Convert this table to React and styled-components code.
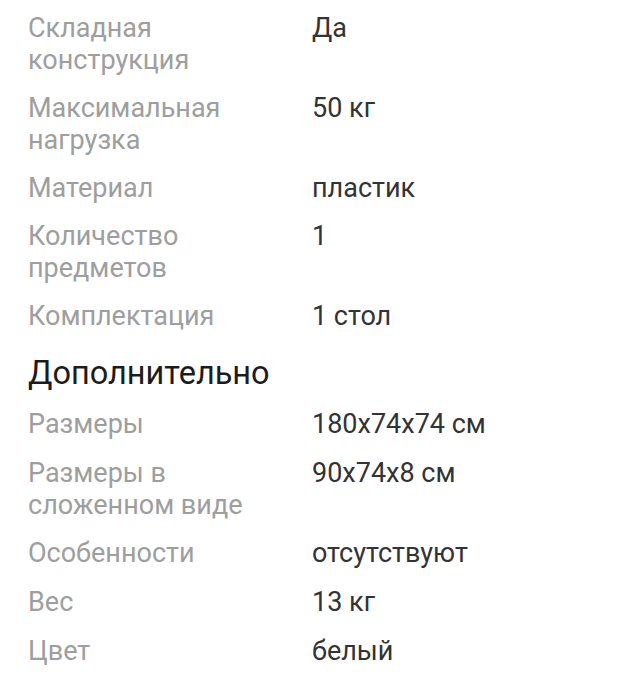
import React from "react";
import styled, { createGlobalStyle } from "styled-components";

const GlobalStyle = createGlobalStyle`
  body {
    margin: 0;
    background: #ffffff;
    font-family: Roboto, "Noto Sans", sans-serif;
  }
`;

const Wrapper = styled.section`
  padding: 4px 20px 0 28px;
`;

const Row = styled.div`
  display: grid;
  grid-template-columns: 284px 1fr;
  padding: ${(p) => (p.$loose ? "8px 0 8.7px" : "8px 0")};
  font-size: 27px;
  line-height: 32px;
`;

const Label = styled.div`
  color: #9e9e9e;
  padding-right: 20px;
`;

const Value = styled.div`
  color: #333333;
`;

const Heading = styled.h2`
  margin: 0;
  padding: 13px 0 7px;
  font-size: 32.5px;
  line-height: 40px;
  font-weight: 400;
  color: #1c1c1c;
`;

const main = [
  ["Складная конструкция", "Да"],
  ["Максимальная нагрузка", "50 кг"],
  ["Материал", "пластик"],
  ["Количество предметов", "1"],
  ["Комплектация", "1 стол"],
];

const extra = [
  ["Размеры", "180x74x74 см"],
  ["Размеры в сложенном виде", "90x74x8 см"],
  ["Особенности", "отсутствуют"],
  ["Вес", "13 кг"],
  ["Цвет", "белый"],
];

const Specs = ({ items, loose }) =>
  items.map(([label, value]) => (
    <Row key={label} $loose={loose}>
      <Label>{label}</Label>
      <Value>{value}</Value>
    </Row>
  ));

const App = () => {
  return (
    <>
      <GlobalStyle />
      <Wrapper>
        <Specs items={main} />
        <Heading>Дополнительно</Heading>
        <Specs items={extra} loose />
      </Wrapper>
    </>
  );
};

export default App;
